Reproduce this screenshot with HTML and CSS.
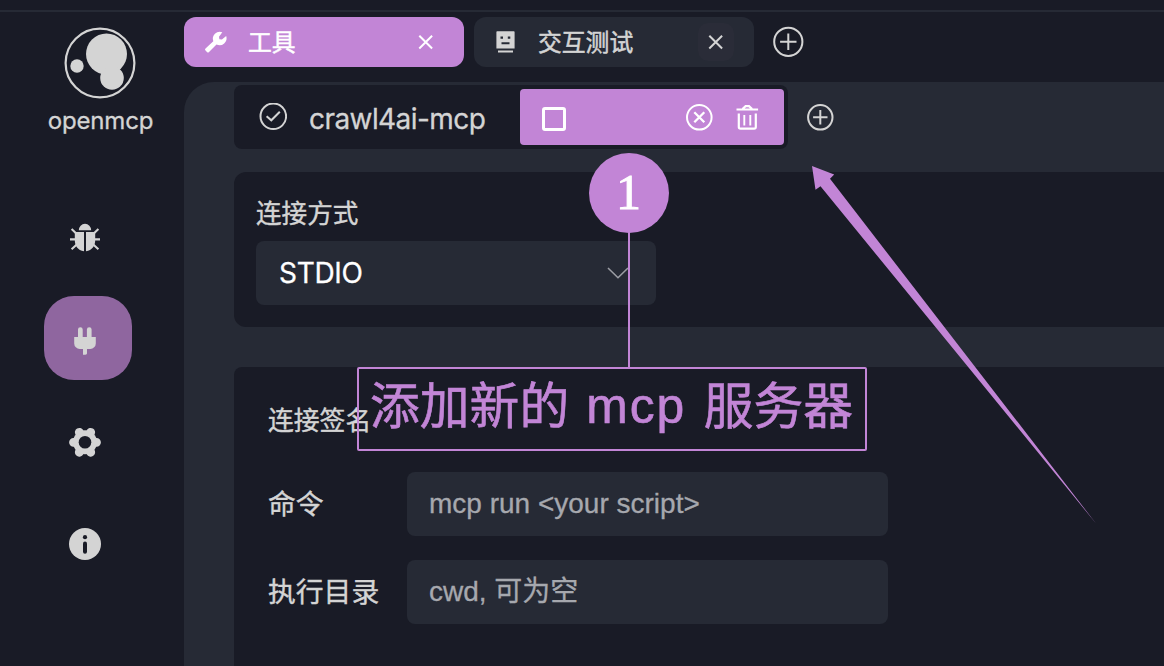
FILE: index.html
```html
<!DOCTYPE html>
<html lang="zh-CN">
<head>
<meta charset="utf-8">
<title>openmcp</title>
<link rel="stylesheet" href="styles.css">
</head>
<body>
<div class="titlebar"></div>
<div class="app">
  <aside class="sidebar">
    <div class="brand">
      <svg class="logo" width="72" height="72" viewBox="0 0 72 72" fill="currentColor">
        <circle cx="36" cy="36" r="34.4" fill="none" stroke="currentColor" stroke-width="2.2"/>
        <circle cx="42.500" cy="27" r="20.500"/><circle cx="48" cy="51" r="11.800"/><circle cx="13" cy="39" r="6.700"/>
      </svg>
      <span class="brand-name">openmcp</span>
    </div>
    <nav class="nav">
      <a class="nav-item">
        <svg width="32" height="32" viewBox="0 0 32 32" fill="currentColor">
          <path d="M9.800 8.300a6.200 6.600 0 0 1 12.400 0zM5.800 10.100h9.200v19.200C8.800 28.300 5.800 23.800 5.800 18.300zM17 10.100h9.200v8.200c0 5.500-3 10-9.200 11z"/>
          <path d="M7 11.300 2.600 7.100M6 17.400H1M7.500 22.800 2.600 27.300M25 11.300 29.400 7.100M26 17.400h5M24.500 22.800l4.900 4.500" fill="none" stroke="currentColor" stroke-width="2.100"/>
        </svg>
      </a>
      <a class="nav-item active">
        <svg width="32" height="32" viewBox="0 0 32 32" fill="currentColor">
          <path d="M5.200 12.900H9V5.500a2.350 2.350 0 0 1 4.700 0v7.400h4.200V5.500a2.350 2.350 0 0 1 4.700 0v7.400h4.200V19.500a5.500 5.500 0 0 1-5.500 5.400H18v4.500a2 2 0 0 1-2 1.400h-2v-5.900h-3.300a5.500 5.500 0 0 1-5.500-5.400z"/>
        </svg>
      </a>
      <a class="nav-item">
        <svg width="32" height="32" viewBox="0 0 32 32">
          <circle cx="16" cy="16.300" r="12" fill="currentColor"/>
          <path d="M4.500 16.300h23M10.300 6.300l11.400 20M21.700 6.300l-11.400 20" stroke="currentColor" stroke-width="8.800" stroke-linecap="round"/>
          <circle cx="16" cy="16.300" r="6.300" fill="#191b26"/>
        </svg>
      </a>
      <a class="nav-item">
        <svg width="32" height="32" viewBox="0 0 32 32">
          <circle cx="16" cy="16" r="16" fill="currentColor"/>
          <circle cx="16" cy="9.200" r="2.100" fill="#191b26"/><rect x="14" y="13.500" width="4" height="12.300" rx="2" fill="#191b26"/>
        </svg>
      </a>
    </nav>
  </aside>
  <main class="content">
    <div class="tabs">
      <div class="tab active">
        <svg class="tab-icon" width="24" height="24" viewBox="0 0 24 24" fill="currentColor">
          <path d="M22.200 6 17.900 9.600 15.400 9.200 15 6.800 18.300 2.200A7 7 0 0 0 9.300 11.200L1.500 18.500a1.400 1.400 0 0 0 0 2l1.500 1.500a1.400 1.400 0 0 0 2 0l7.500-7.500A7 7 0 0 0 22.200 6z"/>
        </svg>
        <span class="tab-label">工具</span>
        <span class="tab-close"><svg width="16" height="16" viewBox="0 0 16 16"><path d="M1.300 1.700l12.800 12.800M14.100 1.700 1.300 14.500"/></svg></span>
      </div>
      <div class="tab">
        <svg class="tab-icon" width="24" height="24" viewBox="0 0 24 24" fill="currentColor">
          <path fill-rule="evenodd" d="M3.200 1.200h16.600a.8.8 0 0 1 .8.800v16.400H2.400V2a.8.800 0 0 1 .8-.8zM6.500 6.500v2.300h2.500V6.500zM13.800 6.500v2.300h2.500V6.500zM7.500 12.300v1.900h8v-1.900zM4 20.400h15v2.200h-15z"/>
        </svg>
        <span class="tab-label">交互测试</span>
        <span class="tab-close"><svg width="16" height="16" viewBox="0 0 16 16"><path d="M1.300 1.700l12.800 12.800M14.100 1.700 1.300 14.500"/></svg></span>
      </div>
      <svg class="tab-add" width="32" height="32" viewBox="0 0 32 32"><circle cx="16.300" cy="15.800" r="14.100"/><path d="M8.100 15.800h16.400M16.300 7.600v16.400"/></svg>
    </div>
    <div class="panel">
      <div class="servers">
        <div class="server-list">
          <div class="server">
            <svg width="28" height="28" viewBox="0 0 28 28"><circle cx="14.300" cy="13.300" r="12.800"/><path d="M7.600 13.200l4.700 4.100 8.500-8.600"/></svg>
            <span class="server-name">crawl4ai-mcp</span>
          </div>
          <div class="server selected">
            <span class="checkbox"></span>
            <svg class="disconnect" width="28" height="28" viewBox="0 0 28 28"><circle cx="14.300" cy="14.300" r="12.300"/><path d="M9.300 9.300l10 10M19.300 9.300l-10 10" stroke-width="2.300"/></svg>
            <svg width="24" height="28" viewBox="0 0 24 28"><path d="M1.500 6.500h21.600M8.100 6V5.500l2.500-2.400h3.400l2.500 2.400V6M3.800 10.500v13.500a1.700 1.700 0 0 0 1.700 1.700h13.600a1.700 1.700 0 0 0 1.700-1.700V10.500" stroke-width="2.200"/><path d="M9.300 12v10.500M15.300 12v10.500" stroke-width="1.900"/></svg>
          </div>
        </div>
        <svg class="server-add" width="28" height="28" viewBox="0 0 28 28"><circle cx="14.300" cy="14.300" r="12.200"/><path d="M7.100 14.300h14.400M14.300 7.100v14.400"/></svg>
      </div>
      <section class="card method">
        <div class="method-label">连接方式</div>
        <div class="select">
          <span>STDIO</span>
          <svg width="24" height="16" viewBox="0 0 24 16"><path d="M2 3l10 9.700L22 3"/></svg>
        </div>
      </section>
      <section class="card form">
        <div class="form-title">连接签名</div>
        <div class="row"><label>命令</label><div class="input">mcp run &lt;your script&gt;</div></div>
        <div class="row"><label>执行目录</label><div class="input">cwd, 可为空</div></div>
      </section>
    </div>
  </main>
</div>
<div class="annotation">
  <div class="badge">1</div>
  <div class="stem"></div>
  <div class="note"><span>添加新的</span><span class="note-latin">mcp</span><span>服务器</span></div>
  <svg class="arrow" width="290" height="362" viewBox="0 0 290 362"><path d="M2 2 24.200 10.500 20 14.800 286 359.500 10.500 22.300 5.500 25.700z"/></svg>
</div>
</body>
</html>
```
FILE: styles.css
```css
* { box-sizing: border-box; }
body {
  margin: 0;
  width: 1164px;
  height: 666px;
  overflow: hidden;
  position: relative;
  display: flex;
  flex-direction: column;
  background: #191b26;
  color: #d4d4d4;
  font-family: Inter, "Noto Sans CJK SC", sans-serif;
}
svg { display: block; flex: none; }
.titlebar { height: 12px; flex: none; border-bottom: 2px solid #262a35; }
.app { flex: 1; min-height: 0; display: flex; }

.sidebar { width: 184px; flex: none; padding-top: 15px; }
.brand { width: 184px; padding-left: 16px; display: flex; flex-direction: column; align-items: center; }
.brand-name { margin-top: 6px; padding-left: 1px; font-size: 24px; line-height: 32px; letter-spacing: -0.15px; -webkit-text-stroke: 0.3px currentColor; }
.nav { margin: 57px 0 0 44px; display: flex; flex-direction: column; gap: 18px; }
.nav-item {
  width: 88px;
  height: 84px;
  padding: 4px 6px 0 0;
  border-radius: 30px;
  display: flex;
  align-items: center;
  justify-content: center;
}
.nav-item.active { background: #8f669f; }

.content { flex: 1; min-width: 0; padding-top: 5px; display: flex; flex-direction: column; }
.tabs { height: 50px; flex: none; display: flex; align-items: center; gap: 10px; }
.tab {
  width: 280px;
  height: 50px;
  padding: 0 20px;
  border-radius: 12px;
  background: #262a35;
  display: flex;
  align-items: center;
}
.tab.active { background: #c285d6; color: #fff; }
.tab-label { margin-left: 20px; padding-top: 2px; font-size: 23.8px; line-height: 36px; -webkit-text-stroke: 0.5px currentColor; }
.tab-close {
  width: 36px;
  height: 38px;
  margin-left: auto;
  border-radius: 10px;
  background: #2a2c38;
  display: flex;
  align-items: center;
  justify-content: center;
}
.tab.active .tab-close { background: none; }
.tab-close svg, .tab-add, .server svg, .server-add, .select svg { fill: none; stroke: currentColor; stroke-width: 2; }
.tab-add { margin-left: 8px; }

.panel {
  flex: 1;
  min-height: 0;
  margin-top: 15px;
  padding: 3px 0 0 50px;
  border-top-left-radius: 30px;
  background: #262a35;
  display: flex;
  flex-direction: column;
}
.servers { flex: none; display: flex; align-items: center; gap: 18px; }
.server-list {
  width: 554px;
  height: 64px;
  padding: 4px;
  border-radius: 8px;
  background: #191b26;
  display: flex;
}
.server { width: 282px; display: flex; align-items: center; padding-left: 21px; }
.server-name { margin-left: 22px; padding-top: 3px; font-size: 28px; line-height: 40px; letter-spacing: -0.57px; -webkit-text-stroke: 0.3px currentColor; }
.server.selected { width: 264px; padding: 0 25px 0 22px; background: #c285d6; color: #fff; border-radius: 4px; }
.checkbox { width: 24px; height: 24px; margin-top: 4px; border: 3px solid #fff; border-radius: 3px; }
.disconnect { margin: 0 22px 0 auto; }

.card { background: #191b26; }
.method { flex: none; height: 155px; margin-top: 23px; padding: 22px 22px 0; border-radius: 12px 0 0 12px; }
.method-label { font-size: 25.6px; line-height: 40px; -webkit-text-stroke: 0.4px currentColor; }
.select {
  width: 400px;
  height: 64px;
  margin-top: 7px;
  padding: 0 26px 0 23px;
  border-radius: 8px;
  background: #262a35;
  color: #fff;
  font-size: 28px;
  letter-spacing: -0.3px;
  -webkit-text-stroke: 0.3px currentColor;
  display: flex;
  align-items: center;
  justify-content: space-between;
}
.select svg { stroke: #9b9da4; stroke-width: 1.6; }
.form { flex: 1; min-height: 0; margin-top: 40px; padding: 34px 34px 0; border-radius: 8px 0 0 0; }
.form-title { height: 71px; font-size: 25.8px; line-height: 40px; -webkit-text-stroke: 0.4px currentColor; }
.row { height: 64px; margin-bottom: 24px; display: flex; align-items: center; font-size: 27.8px; }
.row label { width: 139px; padding-bottom: 4px; -webkit-text-stroke: 0.4px currentColor; }
.input {
  width: 481px;
  height: 64px;
  padding-left: 22px;
  border-radius: 8px;
  background: #262a35;
  color: #a6a8ae;
  font-family: "Liberation Sans", "Noto Sans CJK SC", sans-serif;
  font-size: 28px;
  line-height: 64px;
  -webkit-text-stroke: 0.3px currentColor;
}

.annotation { position: absolute; inset: 0; }
.badge {
  position: absolute;
  left: 588.5px;
  top: 153px;
  width: 80px;
  height: 80px;
  border-radius: 50%;
  background: #c285d6;
  color: #fff;
  font: 50px/79px "Liberation Serif", serif;
  -webkit-text-stroke: 0.9px currentColor;
  text-align: center;
}
.stem { position: absolute; left: 628px; top: 232px; width: 2px; height: 135px; background: #c285d6; }
.note {
  position: absolute;
  left: 357px;
  top: 367px;
  width: 510px;
  height: 84px;
  padding-left: 11px;
  border: 2px solid #c285d6;
  border-radius: 2px;
  color: #c285d6;
  font-size: 49.8px;
  line-height: 75px;
  -webkit-text-stroke: 0.6px currentColor;
  display: flex;
}
.note-latin { width: 134.5px; padding-left: 17px; font-family: "Liberation Sans", sans-serif; letter-spacing: 2px; }
.arrow { position: absolute; left: 810px; top: 164px; fill: #c285d6; }
```
